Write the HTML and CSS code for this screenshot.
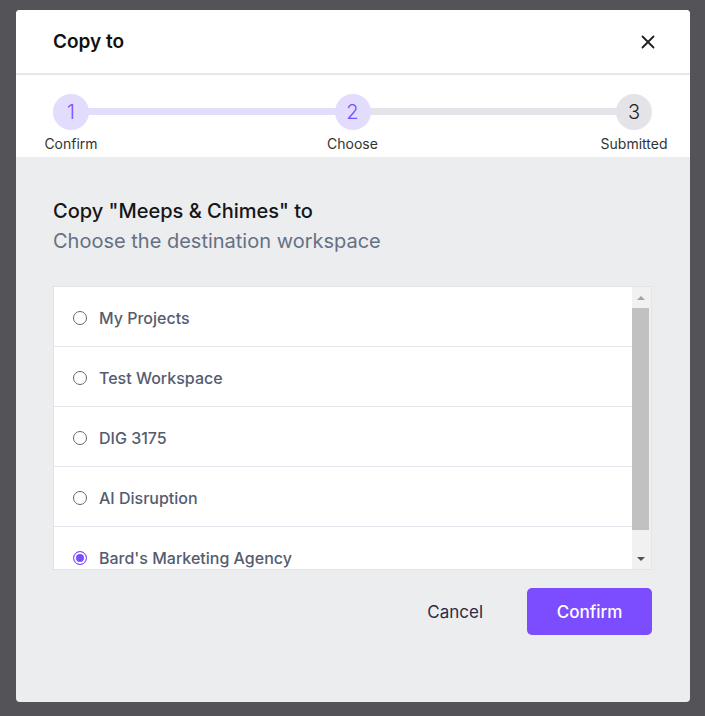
FILE: index.html
```html
<html lang="en">
<head>
    <meta charset="UTF-8">
    <title>Copy to</title>
    <link rel="stylesheet" href="styles.css">
</head>
<body>
    <div class="modal">
        <div class="modal-header">
            <h2 class="modal-title">Copy to</h2>
            <button class="close-btn" aria-label="Close">
                <svg width="14" height="14" viewBox="0 0 14 14">
                    <path d="M1.5 1.5 L12.5 12.5 M12.5 1.5 L1.5 12.5" stroke="#1f1f23" stroke-width="1.8" stroke-linecap="round"/>
                </svg>
            </button>
        </div>

        <div class="stepper">
            <div class="track"></div>
            <div class="step done">
                <div class="step-num">1</div>
                <div class="step-label">Confirm</div>
            </div>
            <div class="step done">
                <div class="step-num">2</div>
                <div class="step-label">Choose</div>
            </div>
            <div class="step">
                <div class="step-num">3</div>
                <div class="step-label">Submitted</div>
            </div>
        </div>

        <div class="modal-body">
            <h3 class="copy-title">Copy "Meeps &amp; Chimes" to</h3>
            <p class="copy-sub">Choose the destination workspace</p>

            <div class="list-box">
                <div class="list">
                    <label class="row"><span class="radio"></span>My Projects</label>
                    <label class="row"><span class="radio"></span>Test Workspace</label>
                    <label class="row"><span class="radio"></span>DIG 3175</label>
                    <label class="row"><span class="radio"></span>AI Disruption</label>
                    <label class="row"><span class="radio checked"></span>Bard's Marketing Agency</label>
                </div>
                <div class="scrollbar">
                    <div class="sb-btn"><span class="arrow-up"></span></div>
                    <div class="sb-thumb"></div>
                    <div class="sb-space"></div>
                    <div class="sb-btn"><span class="arrow-down"></span></div>
                </div>
            </div>

            <div class="actions">
                <button class="btn-cancel">Cancel</button>
                <button class="btn-confirm">Confirm</button>
            </div>
        </div>
    </div>
</body>
</html>
```

FILE: styles.css
```css
body {
    margin: 0;
    padding: 10px 0 0 16px;
    background: #545458;
    font-family: Inter, "Noto Sans", sans-serif;
    height: 716px;
    box-sizing: border-box;
    overflow: hidden;
}

.modal {
    width: 674px;
    height: 692px;
    background: #ecedef;
    border-radius: 4px;
    overflow: hidden;
    display: flex;
    flex-direction: column;
}

.modal-header {
    height: 63px;
    background: #fff;
    border-bottom: 2px solid #e7e6ee;
    display: flex;
    align-items: center;
    justify-content: space-between;
    padding: 0 35px 0 37px;
}
.modal-title {
    margin: 0;
    font-size: 19px;
    font-weight: 600;
    color: #111;
}
.close-btn {
    border: 0;
    background: none;
    padding: 0;
    width: 14px;
    height: 14px;
    display: flex;
}

.stepper {
    position: relative;
    background: #fff;
    height: 82px;
    display: flex;
    justify-content: space-between;
    padding: 19px 16px 0 15px;
    box-sizing: border-box;
}
.track {
    position: absolute;
    left: 55px;
    right: 56px;
    top: 33px;
    height: 7px;
    background: linear-gradient(to right, #e2dcfd 50%, #e4e4e8 50%);
}
.step {
    position: relative;
    width: 80px;
    display: flex;
    flex-direction: column;
    align-items: center;
}
.step-num {
    width: 36px;
    height: 36px;
    border-radius: 50%;
    background: #e4e4e8;
    color: #222;
    font-size: 20px;
    font-weight: 300;
    display: flex;
    align-items: center;
    justify-content: center;
}
.step.done .step-num {
    background: #e2dcfd;
    color: #7c4dff;
}
.step-label {
    margin-top: 5px;
    font-size: 14px;
    color: #333;
    white-space: nowrap;
}

.modal-body {
    padding: 41px 38px 0 37px;
}
.copy-title {
    margin: 0;
    font-size: 20px;
    line-height: 26px;
    font-weight: 500;
    color: #16161a;
}
.copy-sub {
    margin: 4px 0 0;
    font-size: 20px;
    line-height: 26px;
    color: #667085;
}

.list-box {
    margin-top: 32px;
    height: 284px;
    box-sizing: border-box;
    border: 1px solid #e3e3e9;
    background: #fff;
    display: flex;
}
.list {
    flex: 1;
    overflow: hidden;
}
.row {
    height: 60px;
    box-sizing: border-box;
    border-bottom: 1px solid #e6e6ee;
    display: flex;
    align-items: center;
    padding: 2px 0 0 19px;
    font-size: 16px;
    font-weight: 500;
    color: #545c70;
}
.radio {
    width: 14px;
    height: 14px;
    box-sizing: border-box;
    border: 1.5px solid #6a6a6e;
    border-radius: 50%;
    margin-right: 12px;
    flex-shrink: 0;
}
.radio.checked {
    border: 1.5px solid #7c4dff;
    background: #7c4dff;
    box-shadow: inset 0 0 0 2px #fff;
}

.scrollbar {
    width: 19px;
    background: #f1f1f1;
    display: flex;
    flex-direction: column;
}
.sb-btn {
    height: 21px;
    display: flex;
    align-items: center;
    justify-content: center;
    padding-right: 2px;
}
.arrow-up {
    border-left: 4px solid transparent;
    border-right: 4px solid transparent;
    border-bottom: 4px solid #a3a3a3;
}
.arrow-down {
    border-left: 4px solid transparent;
    border-right: 4px solid transparent;
    border-top: 4px solid #505050;
}
.sb-thumb {
    height: 222px;
    margin-right: 2px;
    background: #c1c1c1;
}
.sb-space {
    flex: 1;
}

.actions {
    margin-top: 18px;
    display: flex;
    justify-content: flex-end;
    align-items: center;
    gap: 44px;
}
.btn-cancel {
    border: 0;
    background: none;
    padding: 0;
    font-family: inherit;
    font-size: 17px;
    color: #2d2a45;
}
.btn-confirm {
    width: 125px;
    height: 47px;
    border: 0;
    border-radius: 5px;
    background: #7c4dff;
    color: #fff;
    font-family: inherit;
    font-size: 17px;
    font-weight: 500;
}
```
